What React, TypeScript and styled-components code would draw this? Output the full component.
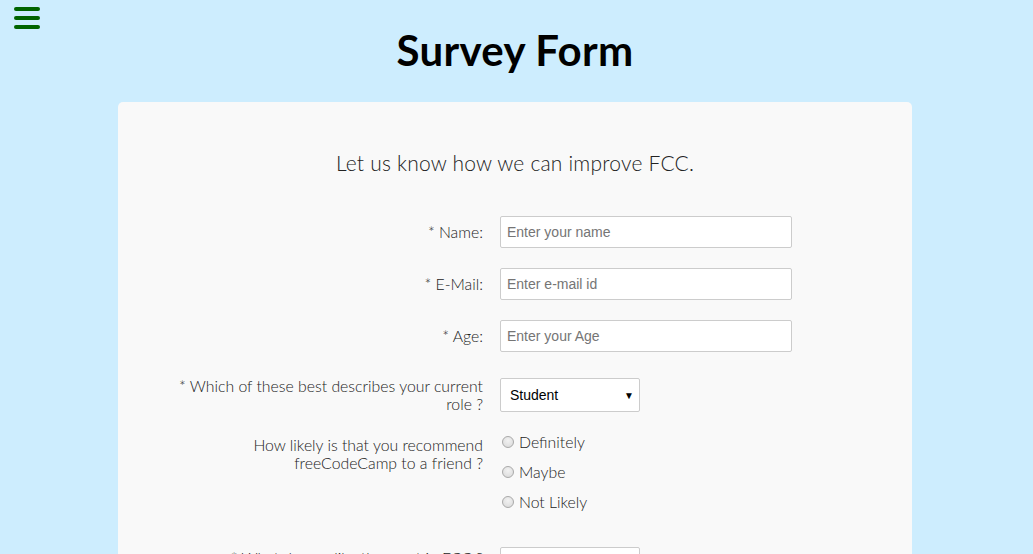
import React from "react";
import styled, { createGlobalStyle } from "styled-components";

const Global = createGlobalStyle`
  html, body { margin: 0; padding: 0; }
  body {
    background: #cdedfe;
    font-family: "Lato", "Open Sans", sans-serif;
    color: #333;
    padding-right: 3px;
  }
`;

const MenuButton = styled.button`
  position: fixed;
  top: 7px;
  left: 14px;
  width: 26px;
  height: 22px;
  padding: 0;
  border: none;
  background: transparent;
  display: flex;
  flex-direction: column;
  justify-content: space-between;
  cursor: pointer;
`;

const Bar = styled.span`
  display: block;
  height: 4px;
  border-radius: 2px;
  background: #006400;
`;

const Title = styled.h1`
  margin: 0;
  padding: 26px 0 28px;
  text-align: center;
  font-size: 42px;
  line-height: 48px;
  font-weight: 700;
  color: #000;
  letter-spacing: 0.3px;
`;

const Card = styled.main`
  width: 794px;
  margin: 0 auto;
  background: #f9f9f9;
  border-radius: 5px;
  padding: 48px 0 40px;
`;

const Subtitle = styled.p`
  margin: 0 0 40px;
  text-align: center;
  font-size: 21px;
  line-height: 26px;
  font-weight: 300;
  color: #222;
  letter-spacing: 0.2px;
`;

const Form = styled.form`
  display: flex;
  flex-direction: column;
  padding: 0 55px;
`;

const Row = styled.div<{ $top?: boolean; $gap?: number }>`
  display: grid;
  grid-template-columns: 310px 1fr;
  column-gap: 17px;
  align-items: ${(p) => (p.$top ? "start" : "center")};
  margin-bottom: ${(p) => p.$gap ?? 20}px;
`;

const Label = styled.label<{ $pad?: number }>`
  text-align: right;
  font-size: 15.8px;
  line-height: 18px;
  font-weight: 300;
  color: #222;
  padding-top: ${(p) => p.$pad ?? 0}px;
`;

const TextInput = styled.input`
  box-sizing: border-box;
  width: 292px;
  height: 32px;
  padding: 0 6px;
  border: 1px solid #ccc;
  border-radius: 2px;
  background: #fff;
  font-family: "Liberation Sans", Arial, sans-serif;
  font-size: 14px;
  color: #333;
  &::placeholder { color: #757575; }
`;

const SelectWrap = styled.div`
  position: relative;
  width: 140px;
  &::after {
    content: "▼";
    position: absolute;
    right: 6px;
    top: 50%;
    transform: translateY(-50%);
    font-size: 10px;
    color: #000;
    pointer-events: none;
  }
`;

const Select = styled.select`
  box-sizing: border-box;
  appearance: none;
  -webkit-appearance: none;
  width: 140px;
  height: 34px;
  padding: 0 9px;
  border: 1px solid #ccc;
  border-radius: 2px;
  background: #fff;
  font-family: "Liberation Sans", Arial, sans-serif;
  font-size: 14px;
  color: #000;
`;

const Options = styled.div`
  display: flex;
  flex-direction: column;
  gap: 12px;
`;

const Option = styled.label`
  display: flex;
  align-items: center;
  gap: 5px;
  font-size: 15.8px;
  line-height: 18px;
  font-weight: 300;
  color: #222;
`;

const Radio = styled.input`
  appearance: none;
  -webkit-appearance: none;
  box-sizing: border-box;
  margin: 0 0 0 2px;
  width: 12px;
  height: 12px;
  border-radius: 50%;
  border: 1px solid #a9a9a9;
  background: radial-gradient(circle at 50% 35%, #f2f2f2 0%, #d8d8d8 100%);
  &:checked {
    background: radial-gradient(circle, #333 0 3px, #e6e6e6 3.5px);
  }
`;

const TextArea = styled.textarea`
  box-sizing: border-box;
  width: 292px;
  height: 90px;
  border: 1px solid #ccc;
  border-radius: 2px;
  font-family: "Liberation Sans", Arial, sans-serif;
  font-size: 14px;
  padding: 6px;
`;

const Submit = styled.button`
  justify-self: start;
  padding: 8px 22px;
  border: none;
  border-radius: 3px;
  background: #006400;
  color: #fff;
  font-family: inherit;
  font-size: 15px;
`;

export default function App() {
  return (
    <>
      <Global />
      <MenuButton aria-label="menu">
        <Bar />
        <Bar />
        <Bar />
      </MenuButton>
      <Title>Survey Form</Title>
      <Card>
        <Subtitle>Let us know how we can improve FCC.</Subtitle>
        <Form>
          <Row>
            <Label htmlFor="name">* Name:</Label>
            <TextInput id="name" placeholder="Enter your name" />
          </Row>
          <Row>
            <Label htmlFor="email">* E-Mail:</Label>
            <TextInput id="email" placeholder="Enter e-mail id" />
          </Row>
          <Row $gap={25}>
            <Label htmlFor="age">* Age:</Label>
            <TextInput id="age" placeholder="Enter your Age" />
          </Row>
          <Row $gap={20}>
            <Label htmlFor="role">* Which of these best describes your current role ?</Label>
            <SelectWrap>
              <Select id="role" defaultValue="student">
                <option value="student">Student</option>
                <option value="job">Full Time Job</option>
                <option value="learner">Full Time Learner</option>
                <option value="other">Other</option>
              </Select>
            </SelectWrap>
          </Row>
          <Row $top $gap={36}>
            <Label $pad={3}>How likely is that you recommend freeCodeCamp to a friend ?</Label>
            <Options>
              <Option><Radio type="radio" name="rec" />Definitely</Option>
              <Option><Radio type="radio" name="rec" />Maybe</Option>
              <Option><Radio type="radio" name="rec" />Not Likely</Option>
            </Options>
          </Row>
          <Row $top>
            <Label htmlFor="like" $pad={2}>* What do you like the most in FCC ?</Label>
            <SelectWrap>
              <Select id="like" defaultValue="">
                <option value="">Select an option</option>
                <option value="challenges">Challenges</option>
                <option value="projects">Projects</option>
                <option value="community">Community</option>
              </Select>
            </SelectWrap>
          </Row>
          <Row>
            <Label htmlFor="comments">Any Comments or Suggestions ?</Label>
            <TextArea id="comments" placeholder="Enter your comment here..." />
          </Row>
          <Row>
            <span />
            <Submit type="submit">Submit</Submit>
          </Row>
        </Form>
      </Card>
    </>
  );
}
